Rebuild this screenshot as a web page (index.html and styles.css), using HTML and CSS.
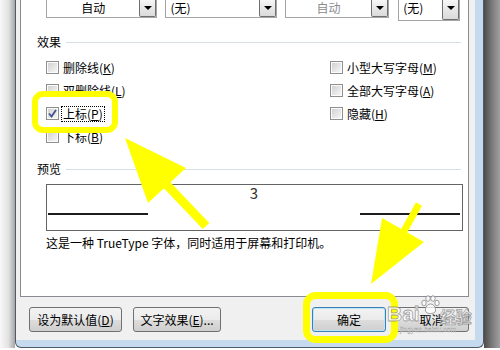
FILE: index.html
```html
<!DOCTYPE html>
<html lang="zh-CN">
  <head>
    <meta charset="UTF-8" />
    <title>字体</title>
    <link rel="stylesheet" href="styles.css">
  </head>
  <body>
    <div class="screen">
      <div class="backdrop-left"></div>
      <div class="window">
        <div class="window-body">
          <div class="page">
            <div class="combo-row">
              <div class="combo combo-color"><span class="combo-text center">自动</span><span class="drop"></span></div>
              <div class="combo combo-line"><span class="combo-text">(无)</span><span class="drop"></span></div>
              <div class="combo combo-ucolor disabled"><span class="combo-text center">自动</span><span class="drop"></span></div>
              <div class="combo combo-emph"><span class="combo-text">(无)</span><span class="drop"></span></div>
            </div>

            <div class="group-title"><span>效果</span></div>
            <div class="effects">
              <div class="col col-left">
                <div class="check"><span class="box"></span><span class="label">删除线(<u>K</u>)</span></div>
                <div class="check"><span class="box"></span><span class="label">双删除线(<u>L</u>)</span></div>
                <div class="check">
                  <span class="box">
                    <svg width="9" height="9" viewBox="0 0 9 9"><path d="M1 4.5 L3.5 7.5 L8 1" fill="none" stroke="#3d5290" stroke-width="1.8"/></svg>
                  </span>
                  <span class="label focused">上标(<u>P</u>)</span>
                </div>
                <div class="check"><span class="box"></span><span class="label">下标(<u>B</u>)</span></div>
              </div>
              <div class="col">
                <div class="check"><span class="box"></span><span class="label">小型大写字母(<u>M</u>)</span></div>
                <div class="check"><span class="box"></span><span class="label">全部大写字母(<u>A</u>)</span></div>
                <div class="check"><span class="box"></span><span class="label">隐藏(<u>H</u>)</span></div>
              </div>
            </div>

            <div class="group-title"><span>预览</span></div>
            <div class="preview">
              <span class="rule"></span>
              <span class="sup">3</span>
              <span class="rule"></span>
            </div>
            <p class="note">这是一种 TrueType 字体，同时适用于屏幕和打印机。</p>
          </div>

          <div class="footer">
            <div class="btn btn-default">设为默认值(<u>D</u>)</div>
            <div class="btn btn-effects">文字效果(<u>E</u>)...</div>
            <div class="spacer"></div>
            <div class="btn btn-ok">确定</div>
            <div class="btn btn-cancel">取消</div>
          </div>
        </div>
      </div>
      <div class="backdrop-right"></div>
    </div>

    <!-- yellow annotations drawn over the screenshot -->
    <svg class="marks" width="500" height="350" viewBox="0 0 500 350">
      <rect x="35" y="94" width="80" height="36" rx="8" fill="none" stroke="#ffff00" stroke-width="6"/>
      <rect x="306.5" y="295.5" width="88" height="44" rx="9" fill="none" stroke="#ffff00" stroke-width="7"/>
      <polygon points="125,138 186,168 148,203" fill="#ffff00"/>
      <line x1="164" y1="182" x2="206" y2="226" stroke="#ffff00" stroke-width="9"/>
      <polygon points="382,218 424,242 371,284" fill="#ffff00"/>
      <line x1="403" y1="233" x2="419" y2="204" stroke="#ffff00" stroke-width="7"/>
    </svg>

    <div class="watermark">
      <div class="wm-top">
        <span class="wm-bai">Bai</span>
        <svg class="wm-paw" width="20" height="20" viewBox="0 0 20 20">
          <g fill="rgba(255,255,255,0.75)" stroke="rgba(130,130,130,0.75)" stroke-width="1">
            <ellipse cx="4" cy="8" rx="2.2" ry="2.8"/>
            <ellipse cx="8" cy="3.5" rx="2.2" ry="2.8"/>
            <ellipse cx="13" cy="3.5" rx="2.2" ry="2.8"/>
            <ellipse cx="17" cy="8" rx="2.2" ry="2.8"/>
            <path d="M10.5 9 C6 9 4.5 15 6 17 C7.5 19 13.5 19 15 17 C16.5 15 15 9 10.5 9 Z"/>
          </g>
        </svg>
        <span class="wm-jy">经验</span>
      </div>
      <div class="wm-url">jingyan.baidu.com</div>
    </div>
  </body>
</html>
```

FILE: styles.css
```css
* {
  margin: 0;
  padding: 0;
  box-sizing: border-box;
}

html,
body {
  width: 500px;
  height: 350px;
  overflow: hidden;
}

body {
  position: relative;
  font-family: "Noto Sans CJK SC", "Noto Sans", sans-serif;
  font-size: 12px;
  color: #000;
  background: #fff;
}

u {
  text-decoration: underline;
  text-underline-offset: 1px;
}

.screen {
  display: flex;
  height: 350px;
}

.backdrop-left {
  width: 15px;
  height: 348px;
  background: linear-gradient(to right, #f8f8f8, #e3e3e3 55%, #a6a6a6);
}

.backdrop-right {
  width: 16px;
  height: 348px;
  background: linear-gradient(to right, #4c4c4c, #7a7a7a 50%, #a0a0a0);
}

.window {
  width: 469px;
  height: 348px;
  background: #c6daef;
  border: 1px solid #4f5a66;
  border-top: none;
  border-radius: 0 0 6px 6px;
  padding: 0 8px 7px 0;
}

.window-body {
  height: 340px;
  background: #f0f0f0;
  padding: 0 6px 0 4px;
  display: flex;
  flex-direction: column;
}

.page {
  height: 297px;
  background: #fff;
  border: 1px solid #898c95;
  border-top: none;
}

/* combo boxes cut off at the top */
.combo-row {
  display: flex;
  align-items: flex-start;
  height: 21px;
  padding-left: 25px;
}

.combo {
  display: flex;
  height: 18px;
  border: 1px solid #a5a5a5;
  border-top: none;
  background: #fff;
  margin-right: 8px;
}

.combo-color,
.combo-line {
  width: 112px;
}

.combo-ucolor {
  width: 105px;
  margin-right: 9px;
}

.combo-emph {
  width: 62px;
  height: 21px;
}

.combo-text {
  flex: 1;
  line-height: 16px;
  padding-left: 4px;
}

.combo-text.center {
  text-align: center;
  padding-left: 0;
}

.disabled .combo-text {
  color: #8c8c8c;
}

.drop {
  position: relative;
  width: 17px;
  border: 1px solid #6f6f6f;
  border-top: none;
  border-radius: 0 0 2px 2px;
  background: linear-gradient(#f6f6f6, #dadada);
}

.drop::after {
  content: "";
  position: absolute;
  left: 4px;
  top: 6px;
  border-left: 4px solid transparent;
  border-right: 4px solid transparent;
  border-top: 4px solid #000;
}

.group-title {
  display: flex;
  align-items: center;
  line-height: 16px;
  margin: 13px 7px 0 16px;
}

.group-title::after {
  content: "";
  flex: 1;
  height: 1px;
  margin-left: 5px;
  background: #d5dfe5;
}

.effects {
  display: flex;
  margin-top: 6px;
  padding-left: 25px;
}

.col-left {
  width: 284px;
}

.check {
  display: flex;
  align-items: center;
  height: 23px;
}

.box {
  width: 13px;
  height: 13px;
  border: 1px solid #8e8f8f;
  padding: 1px;
  background: linear-gradient(135deg, #d2d2d2, #f6f6f6) content-box, #fbfbfb;
  display: flex;
  align-items: center;
  justify-content: center;
}

.label {
  margin-left: 2px;
  padding: 0 1px;
  line-height: 14px;
  border: 1px solid transparent;
}

.label.focused {
  border: 1px dotted #000;
}

.preview {
  display: flex;
  justify-content: space-between;
  width: 417px;
  height: 47px;
  margin: 7px 0 0 25px;
  padding: 0 2px 0 1px;
  border: 1px solid #646464;
}

.rule {
  width: 100px;
  height: 2px;
  margin-top: 28px;
  background: #1c1c1c;
}

.sup {
  font-size: 15px;
  line-height: 15px;
  color: #333;
}

.note {
  margin: 4px 0 0 25px;
  line-height: 16px;
}

.footer {
  display: flex;
  padding: 10px 0 0 9px;
}

.spacer {
  flex: 1;
}

.btn {
  height: 25px;
  display: flex;
  align-items: center;
  justify-content: center;
  border: 1px solid #707070;
  border-radius: 3px;
  background: linear-gradient(#f2f2f2 0, #ebebeb 50%, #dddddd 50%, #cfcfcf 100%);
}

.btn-default {
  width: 93px;
  margin-right: 11px;
}

.btn-effects {
  width: 88px;
}

.btn-ok {
  width: 74px;
  margin-right: 8px;
  border-color: #3c7fb1;
  box-shadow: inset 0 0 0 1px #b9e6fb;
}

.btn-cancel {
  width: 75px;
}

.marks {
  position: absolute;
  left: 0;
  top: 0;
}

.watermark {
  position: absolute;
  left: 387px;
  top: 294px;
  color: rgba(255, 255, 255, 0.75);
  -webkit-text-stroke: 0.8px rgba(130, 130, 130, 0.75);
}

.wm-top {
  display: flex;
  align-items: flex-start;
}

.wm-bai {
  font-family: "Liberation Sans", sans-serif;
  font-weight: bold;
  font-size: 21px;
  line-height: 21px;
  margin-top: 9px;
}

.wm-paw {
  margin-top: 1px;
}

.wm-jy {
  font-size: 16px;
  line-height: 16px;
  font-weight: bold;
  margin-top: 14px;
}

.wm-url {
  font-family: "Liberation Sans", sans-serif;
  font-size: 7px;
  line-height: 7px;
  margin: 2px 0 0 13px;
  -webkit-text-stroke: 0.3px rgba(130, 130, 130, 0.75);
}
```
